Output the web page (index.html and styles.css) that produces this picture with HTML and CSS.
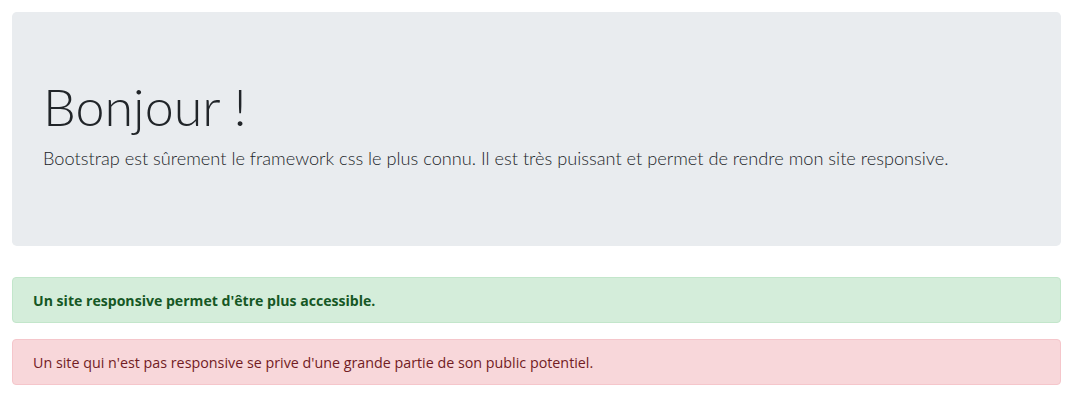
FILE: index.html
```html
<!DOCTYPE html>
<html lang="fr">
<head>
<meta charset="utf-8">
<title>Bonjour</title>
<link rel="stylesheet" href="styles.css">
</head>
<body>
<div class="page">
  <div class="jumbotron">
    <h1 class="display">Bonjour !</h1>
    <p class="lead">Bootstrap est sûrement le framework css le plus connu. Il est très puissant et permet de rendre mon site responsive.</p>
  </div>
  <div class="alert alert-success"><strong class="alert-strong">Un site responsive permet d'être plus accessible.</strong></div>
  <div class="alert alert-danger">Un site qui n'est pas responsive se prive d'une grande partie de son public potentiel.</div>
</div>
</body>
</html>
```
FILE: styles.css
```css
html, body {
  margin: 0;
  padding: 0;
  background: #fff;
}
body {
  font-family: "Lato", "Open Sans", sans-serif;
  color: #212529;
}
.page {
  padding: 12px 13px 0 12px;
}
.jumbotron {
  background: #e9ecef;
  border-radius: 4.8px;
  padding: 63px 31px 0 31px;
  height: 234px;
  box-sizing: border-box;
  margin-bottom: 31px;
}
.display {
  font-size: 52px;
  font-weight: 300;
  line-height: 62px;
  margin: 0 0 8px 0;
}
.lead {
  font-size: 18.2px;
  font-weight: 300;
  line-height: 27px;
  margin: 0;
}
.alert {
  border: 1px solid transparent;
  border-radius: 4px;
  padding: 13px 20px 11px 20px;
  font-size: 14.3px;
  line-height: 20px;
  margin-bottom: 16px;
  font-family: "Open Sans", sans-serif;
}
.alert-strong {
  font-size: 14.1px;
  font-weight: 700;
}
.alert-success {
  background: #d4edda;
  border-color: #c3e6cb;
  color: #155724;
}
.alert-danger {
  background: #f8d7da;
  border-color: #f5c6cb;
  color: #721c24;
}
```
